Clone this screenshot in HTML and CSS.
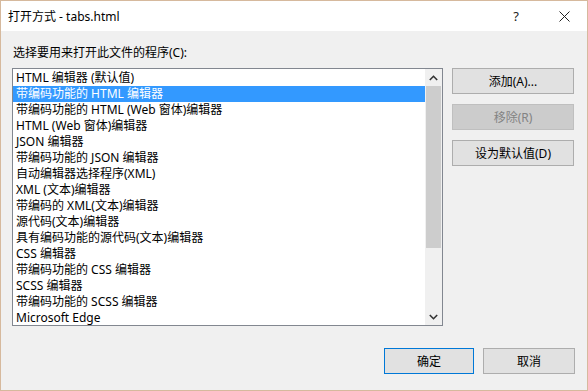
FILE: index.html
```html
<!DOCTYPE html>
<html lang="zh-CN">
<head>
<meta charset="utf-8">
<title>打开方式</title>
<link rel="stylesheet" href="styles.css">
</head>
<body>
<div class="window">
  <div class="titlebar">
    <span class="title">打开方式 - tabs.html</span>
    <span class="tb-help">?</span>
    <span class="tb-close">
      <svg width="11" height="11" viewBox="0 0 11 11"><path d="M0.5 0.5 L10.5 10.5 M10.5 0.5 L0.5 10.5" stroke="#222" stroke-width="1" fill="none"/></svg>
    </span>
  </div>
  <div class="content">
    <div class="label">选择要用来打开此文件的程序(C):</div>
    <div class="main">
      <div class="listbox">
        <ul class="items">
          <li>HTML 编辑器 (默认值)</li>
          <li class="sel">带编码功能的 HTML 编辑器</li>
          <li>带编码功能的 HTML (Web 窗体)编辑器</li>
          <li>HTML (Web 窗体)编辑器</li>
          <li>JSON 编辑器</li>
          <li>带编码功能的 JSON 编辑器</li>
          <li>自动编辑器选择程序(XML)</li>
          <li>XML (文本)编辑器</li>
          <li>带编码的 XML(文本)编辑器</li>
          <li>源代码(文本)编辑器</li>
          <li>具有编码功能的源代码(文本)编辑器</li>
          <li>CSS 编辑器</li>
          <li>带编码功能的 CSS 编辑器</li>
          <li>SCSS 编辑器</li>
          <li>带编码功能的 SCSS 编辑器</li>
          <li>Microsoft Edge</li>
        </ul>
        <div class="scrollbar">
          <div class="arrow">
            <svg width="9" height="6" viewBox="0 0 9 6"><path d="M0.8 5 L4.5 1.3 L8.2 5" stroke="#333" stroke-width="1.6" fill="none"/></svg>
          </div>
          <div class="track"><div class="thumb"></div></div>
          <div class="arrow">
            <svg width="9" height="6" viewBox="0 0 9 6"><path d="M0.8 1 L4.5 4.7 L8.2 1" stroke="#333" stroke-width="1.6" fill="none"/></svg>
          </div>
        </div>
      </div>
      <div class="side">
        <button class="btn">添加(A)...</button>
        <button class="btn disabled">移除(R)</button>
        <button class="btn">设为默认值(D)</button>
      </div>
    </div>
    <div class="footer">
      <button class="btn default">确定</button>
      <button class="btn cancel">取消</button>
    </div>
  </div>
</div>
</body>
</html>
```
FILE: styles.css
```css
html, body {
  margin: 0;
  padding: 0;
  background: #f0f0f0;
}
body {
  font-family: "Noto Sans", "Noto Sans CJK SC", sans-serif;
  font-size: 12px;
  color: #000;
}
.window {
  width: 588px;
  height: 391px;
  box-sizing: border-box;
  border: 1px solid #d6b99d;
  background: #f0f0f0;
  display: flex;
  flex-direction: column;
}
.titlebar {
  height: 30px;
  background: #fff;
  display: flex;
  align-items: center;
  flex-shrink: 0;
}
.title {
  flex: 1;
  padding-left: 7px;
  font-size: 12px;
  color: #000;
}
.tb-help {
  width: 46px;
  text-align: center;
  font-size: 13px;
  color: #222;
  margin-right: 2px;
}
.tb-close {
  width: 46px;
  display: flex;
  justify-content: center;
  align-items: center;
}
.content {
  flex: 1;
  display: flex;
  flex-direction: column;
  padding: 14px 12px 0 11px;
}
.label {
  height: 16px;
  line-height: 16px;
  padding-left: 1px;
  margin-bottom: 7px;
}
.main {
  display: flex;
  align-items: flex-start;
}
.listbox {
  width: 431px;
  height: 258px;
  box-sizing: border-box;
  border: 1px solid #828790;
  background: #fff;
  display: flex;
  overflow: hidden;
}
.items {
  list-style: none;
  margin: 0;
  padding: 1px 0 0 0;
  flex: 1;
  overflow: hidden;
}
.items li {
  height: 16px;
  line-height: 16px;
  padding-left: 3px;
  white-space: nowrap;
}
.items li.sel {
  background: #3399ff;
  color: #fff;
}
.scrollbar {
  width: 17px;
  background: #f0f0f0;
  display: flex;
  flex-direction: column;
}
.arrow {
  height: 17px;
  display: flex;
  align-items: center;
  justify-content: center;
  background: #f0f0f0;
}
.track {
  flex: 1;
}
.thumb {
  height: 162px;
  margin: 0 1px;
  background: #cdcdcd;
}
.side {
  margin-left: 9px;
  display: flex;
  flex-direction: column;
  gap: 10px;
  padding-top: 0;
}
.btn {
  font-family: inherit;
  font-size: 12px;
  height: 26px;
  box-sizing: border-box;
  border: 1px solid #adadad;
  background: #e1e1e1;
  color: #000;
  padding: 0;
  margin: 0;
}
.side .btn {
  width: 122px;
}
.btn.disabled {
  background: #cccccc;
  border-color: #bfbfbf;
  color: #838383;
}
.footer {
  display: flex;
  justify-content: flex-end;
  gap: 9px;
  margin-top: 22px;
}
.btn.default {
  width: 90px;
  border-color: #0078d7;
}
.btn.cancel {
  width: 92px;
}
```
